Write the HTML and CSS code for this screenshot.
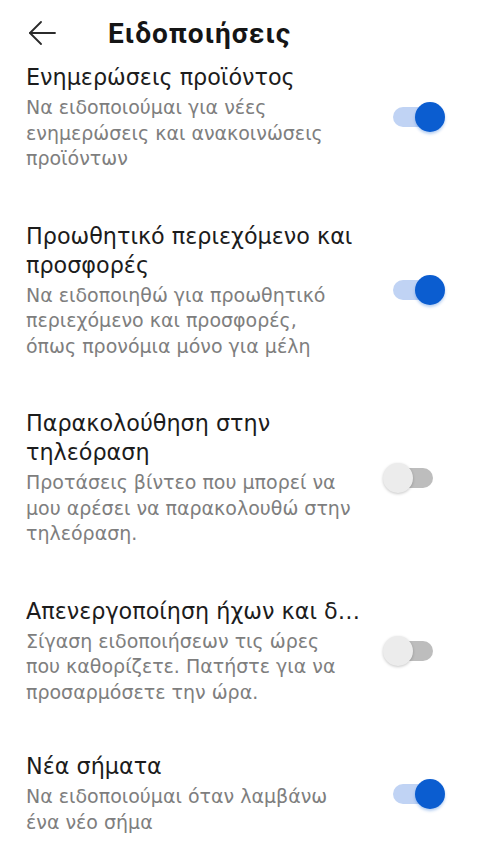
FILE: index.html
```html
<!DOCTYPE html>
<html lang="el">
<head>
    <meta charset="UTF-8">
    <meta name="viewport" content="width=device-width, initial-scale=1.0">
    <title>Ειδοποιήσεις</title>
    <link rel="stylesheet" href="styles.css">
</head>
<body>

    <div class="screen">
        <div class="header">
            <button class="back" aria-label="Πίσω">
                <svg width="28" height="24" viewBox="0 0 28 24" fill="none" stroke="#2b2b2b" stroke-width="1.8" stroke-linecap="round" stroke-linejoin="round">
                    <path d="M2 12H27"/>
                    <path d="M13 1L2 12L13 23"/>
                </svg>
            </button>
            <h1>Ειδοποιήσεις</h1>
        </div>

        <div class="list-view">
            <div class="list">
                <div class="item">
                    <div class="text">
                        <div class="title">Ενημερώσεις προϊόντος</div>
                        <div class="desc">Να ειδοποιούμαι για νέες<br>ενημερώσεις και ανακοινώσεις<br>προϊόντων</div>
                    </div>
                    <div class="switch on"><span class="thumb"></span></div>
                </div>

                <div class="item">
                    <div class="text">
                        <div class="title">Προωθητικό περιεχόμενο και<br>προσφορές</div>
                        <div class="desc">Να ειδοποιηθώ για προωθητικό<br>περιεχόμενο και προσφορές,<br>όπως προνόμια μόνο για μέλη</div>
                    </div>
                    <div class="switch on"><span class="thumb"></span></div>
                </div>

                <div class="item">
                    <div class="text">
                        <div class="title">Παρακολούθηση στην<br>τηλεόραση</div>
                        <div class="desc">Προτάσεις βίντεο που μπορεί να<br>μου αρέσει να παρακολουθώ στην<br>τηλεόραση.</div>
                    </div>
                    <div class="switch"><span class="thumb"></span></div>
                </div>

                <div class="item">
                    <div class="text">
                        <div class="title single">Απενεργοποίηση ήχων και διακοπών</div>
                        <div class="desc">Σίγαση ειδοποιήσεων τις ώρες<br>που καθορίζετε. Πατήστε για να<br>προσαρμόσετε την ώρα.</div>
                    </div>
                    <div class="switch"><span class="thumb"></span></div>
                </div>

                <div class="item">
                    <div class="text">
                        <div class="title">Νέα σήματα</div>
                        <div class="desc">Να ειδοποιούμαι όταν λαμβάνω<br>ένα νέο σήμα</div>
                    </div>
                    <div class="switch on"><span class="thumb"></span></div>
                </div>
            </div>
        </div>
    </div>

</body>
</html>
```

FILE: styles.css
```css
body {
    margin: 0;
    background-color: #fff;
    font-family: "DejaVu Sans", "Noto Sans", sans-serif;
    color: #1c1c1c;
}
.screen {
    width: 480px;
    height: 850px;
    overflow: hidden;
    display: flex;
    flex-direction: column;
}
.header {
    height: 67px;
    flex-shrink: 0;
    display: flex;
    align-items: center;
    background-color: #fff;
}
.back {
    border: none;
    background: none;
    padding: 0;
    margin: -2px 0 0 28px;
    width: 28px;
    height: 24px;
    display: flex;
}
h1 {
    margin: 0 0 0 52px;
    font-family: Roboto, sans-serif;
    font-size: 28px;
    font-weight: 700;
    color: #151515;
    letter-spacing: 1px;
}
.list-view {
    flex: 1;
    overflow: hidden;
}
.list {
    margin-top: -29px;
}
.item {
    display: flex;
    align-items: center;
    padding: 25px 0 25px 26px;
}
.item:nth-child(4) {
    padding-bottom: 22px;
}
.text {
    width: 340px;
}
.title {
    font-size: 22.3px;
    line-height: 29px;
    color: #1c1c1c;
}
.title.single {
    width: 336px;
    white-space: nowrap;
    overflow: hidden;
    text-overflow: ellipsis;
}
.desc {
    margin-top: 3px;
    font-size: 19px;
    line-height: 25.5px;
    color: #7e7e7e;
}
.switch {
    margin-left: 27px;
    width: 40px;
    height: 20px;
    border-radius: 10px;
    background-color: #bdbdbd;
    position: relative;
}
.thumb {
    position: absolute;
    top: -5px;
    left: -10px;
    width: 30px;
    height: 30px;
    border-radius: 50%;
    background-color: #ececec;
    box-shadow: 0 1px 3px rgba(0, 0, 0, 0.22);
}
.switch.on {
    background-color: #c0d3f4;
}
.switch.on .thumb {
    left: auto;
    right: -12px;
    background-color: #0b5dd0;
    box-shadow: 0 2px 3px rgba(11, 93, 208, 0.3);
}
```
